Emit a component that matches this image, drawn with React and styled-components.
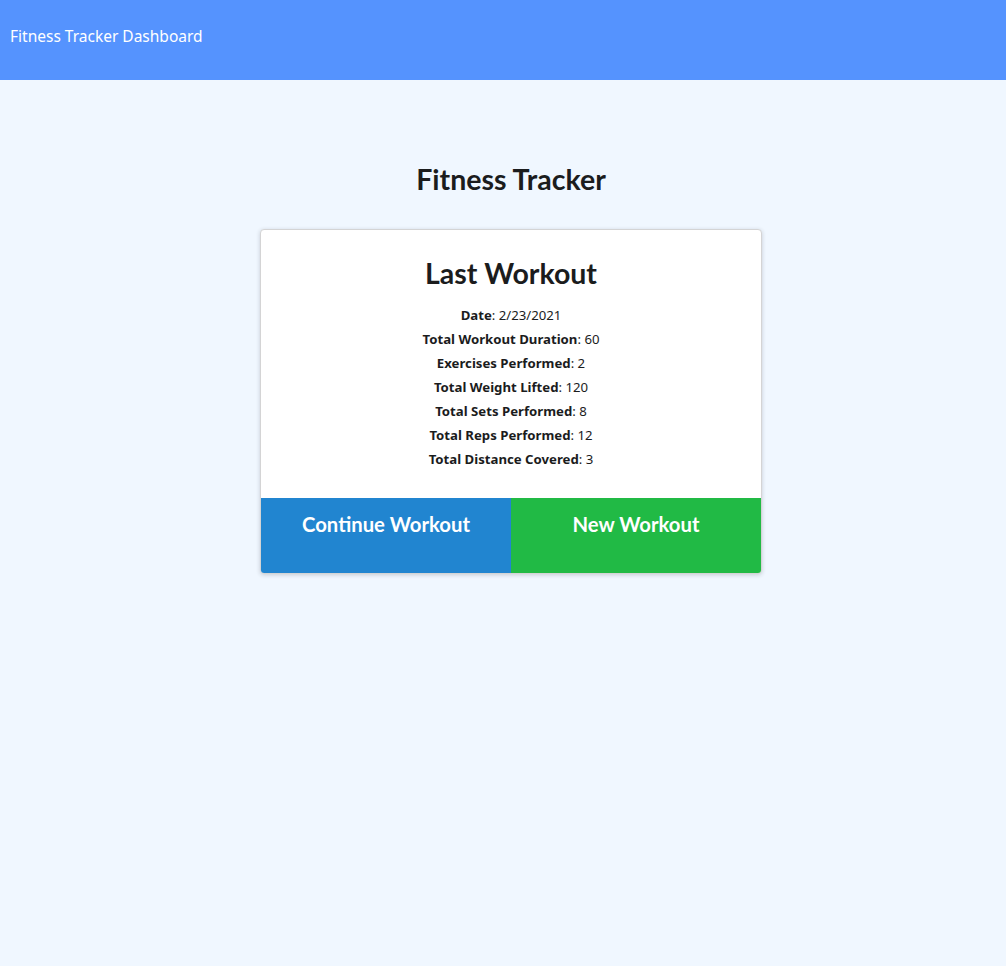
import styled, { createGlobalStyle } from "styled-components";

const GlobalStyle = createGlobalStyle`
  html, body {
    margin: 0;
    padding: 0;
    background: #f0f7ff;
    font-family: "Noto Sans", "Open Sans", sans-serif;
    color: #1b1c1d;
  }
  * { box-sizing: border-box; }
`;

const Page = styled.div`
  min-height: 966px;
  background: #f0f7ff;
`;

const TopBar = styled.header`
  height: 80px;
  background: #5593fe;
  display: flex;
  align-items: flex-start;
  padding: 25px 10px 0;
  color: #fff;
  font-size: 15.5px;
  line-height: 22px;
`;

const Main = styled.main`
  display: flex;
  flex-direction: column;
  align-items: center;
  padding: 82px 0 0 16px;
`;

const Title = styled.h1`
  font-family: Lato, sans-serif;
  font-weight: 700;
  font-size: 28.5px;
  margin: 0 0 33px;
  line-height: 34px;
  color: #1b1c1d;
`;

const Card = styled.div`
  width: 502px;
  background: #fff;
  border: 1px solid #d4d4d5;
  border-radius: 4px;
  box-shadow: 0 1px 4px 0 rgba(34, 36, 38, 0.2);
  overflow: hidden;
`;

const CardBody = styled.div`
  padding: 26px 16px 27px;
  text-align: center;
`;

const CardTitle = styled.h2`
  font-family: Lato, sans-serif;
  font-weight: 700;
  font-size: 28.5px;
  line-height: 34px;
  margin: 0 0 13px;
`;

const Stat = styled.p`
  margin: 0;
  font-size: 13.2px;
  line-height: 24px;
  color: #1b1c1d;
  b { font-weight: 700; }
`;

const Buttons = styled.div`
  display: flex;
`;

const ActionButton = styled.button`
  flex: 1;
  height: 75px;
  border: none;
  margin: 0;
  padding: 14px 0 0;
  display: flex;
  justify-content: center;
  align-items: flex-start;
  background: ${(p) => p.$bg};
  color: #fff;
  font-family: Lato, sans-serif;
  font-weight: 700;
  font-size: 20.3px;
  cursor: pointer;
`;

const stats = [
  ["Date", "2/23/2021"],
  ["Total Workout Duration", "60"],
  ["Exercises Performed", "2"],
  ["Total Weight Lifted", "120"],
  ["Total Sets Performed", "8"],
  ["Total Reps Performed", "12"],
  ["Total Distance Covered", "3"],
];

export default function App() {
  return (
    <Page>
      <GlobalStyle />
      <TopBar>Fitness Tracker Dashboard</TopBar>
      <Main>
        <Title>Fitness Tracker</Title>
        <Card>
          <CardBody>
            <CardTitle>Last Workout</CardTitle>
            {stats.map(([k, v]) => (
              <Stat key={k}>
                <b>{k}</b>: {v}
              </Stat>
            ))}
          </CardBody>
          <Buttons>
            <ActionButton $bg="#2185d0">Continue Workout</ActionButton>
            <ActionButton $bg="#21ba45">New Workout</ActionButton>
          </Buttons>
        </Card>
      </Main>
    </Page>
  );
}
